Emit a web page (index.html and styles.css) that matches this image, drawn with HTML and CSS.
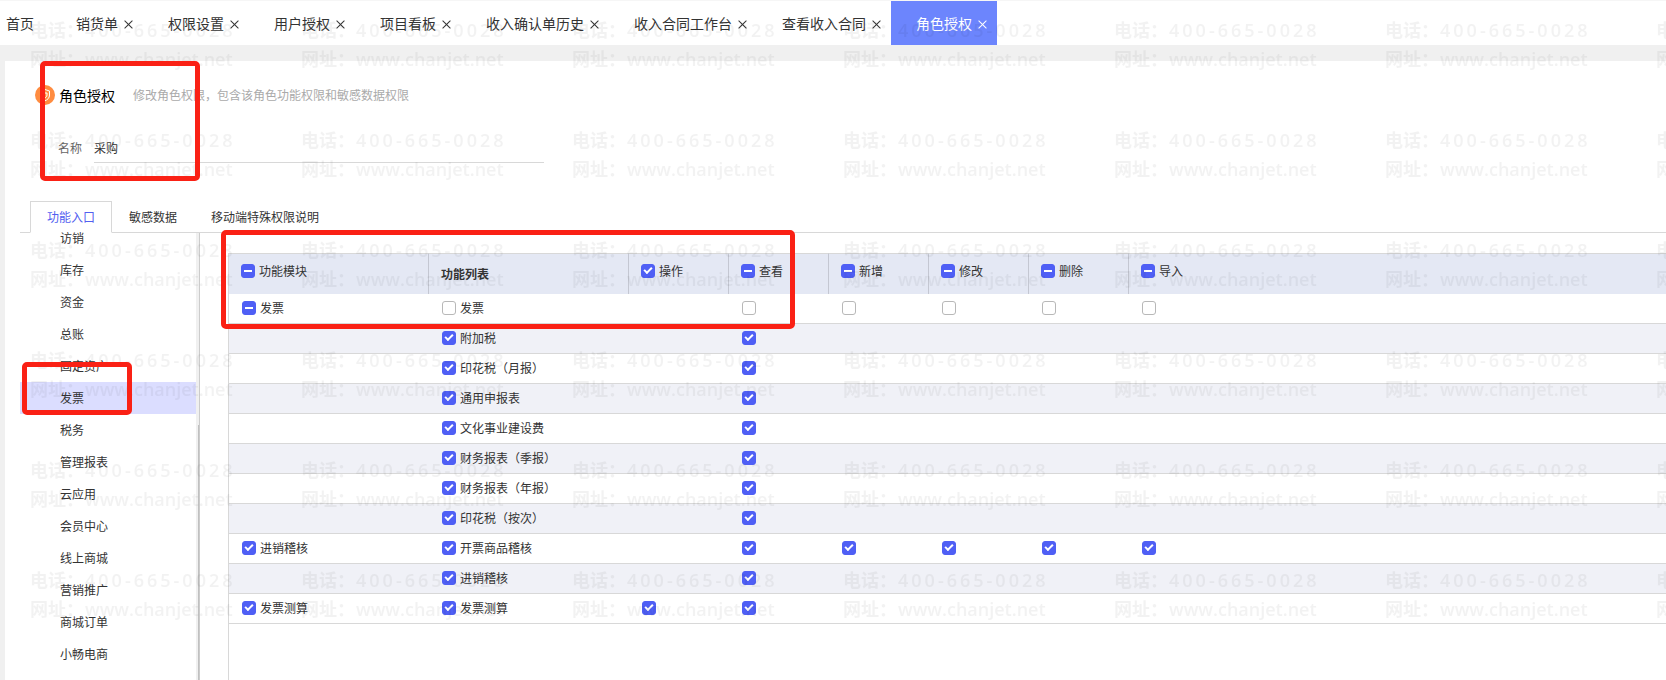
FILE: index.html
```html
<!DOCTYPE html>
<html lang="zh-CN">
<head>
    <meta charset="UTF-8" />
    <meta name="viewport" content="width=device-width, initial-scale=1" />
    <title>角色授权</title>
    <link rel="stylesheet" href="styles.css">
</head>
<body>

<nav class="page-tabs">
    <a class="home" href="#">首页</a>
    <div class="page-tab"><a href="#">销货单</a><button class="close" aria-label="关闭销货单"></button></div>
    <div class="page-tab"><a href="#">权限设置</a><button class="close" aria-label="关闭权限设置"></button></div>
    <div class="page-tab"><a href="#">用户授权</a><button class="close" aria-label="关闭用户授权"></button></div>
    <div class="page-tab"><a href="#">项目看板</a><button class="close" aria-label="关闭项目看板"></button></div>
    <div class="page-tab"><a href="#">收入确认单历史</a><button class="close" aria-label="关闭收入确认单历史"></button></div>
    <div class="page-tab"><a href="#">收入合同工作台</a><button class="close" aria-label="关闭收入合同工作台"></button></div>
    <div class="page-tab"><a href="#">查看收入合同</a><button class="close" aria-label="关闭查看收入合同"></button></div>
    <div class="page-tab active"><a href="#">角色授权</a><button class="close" aria-label="关闭角色授权"></button></div>
</nav>

<main class="content">
    <header class="title-row">
        <svg class="title-icon" width="20" height="20" viewBox="0 0 20 20" aria-hidden="true">
            <circle cx="10" cy="10" r="10" fill="#ff8c40" />
            <path d="M10 4.5 L14.5 6 V10 C14.5 13 12.5 14.8 10 15.8 C7.5 14.8 5.5 13 5.5 10 V6 Z" fill="none" stroke="#fff" />
            <path d="M8 8 H12 V10 C12 11.5 11 12.3 10 13 C9 12.3 8 11.5 8 10 Z" fill="none" stroke="#fff" />
        </svg>
        <h1>角色授权</h1>
        <p>修改角色权限，包含该角色功能权限和敏感数据权限</p>
    </header>

    <div class="name-row">
        <label for="roleName">名称</label>
        <input type="text" id="roleName" value="采购" />
    </div>

    <div class="tabs">
        <button class="tab active">功能入口</button>
        <button class="tab">敏感数据</button>
        <button class="tab">移动端特殊权限说明</button>
    </div>

    <div class="workspace">
        <aside class="sidebar">
            <ul class="menu">
                <li><a href="#">访销</a></li>
                <li><a href="#">库存</a></li>
                <li><a href="#">资金</a></li>
                <li><a href="#">总账</a></li>
                <li><a href="#">固定资产</a></li>
                <li><a class="active" href="#">发票</a></li>
                <li><a href="#">税务</a></li>
                <li><a href="#">管理报表</a></li>
                <li><a href="#">云应用</a></li>
                <li><a href="#">会员中心</a></li>
                <li><a href="#">线上商城</a></li>
                <li><a href="#">营销推广</a></li>
                <li><a href="#">商城订单</a></li>
                <li><a href="#">小畅电商</a></li>
            </ul>
            <div class="scroll-track"><div class="scroll-thumb"></div></div>
        </aside>

        <section class="grid">
            <table>
                <colgroup>
                    <col class="wide"><col class="wide">
                    <col class="narrow"><col class="narrow"><col class="narrow"><col class="narrow"><col class="narrow">
                    <col>
                </colgroup>
                <thead>
                    <tr>
                        <th><label><input type="checkbox" class="partial">功能模块</label></th>
                        <th class="plain">功能列表</th>
                        <th><label><input type="checkbox" checked>操作</label></th>
                        <th><label><input type="checkbox" class="partial">查看</label></th>
                        <th><label><input type="checkbox" class="partial">新增</label></th>
                        <th><label><input type="checkbox" class="partial">修改</label></th>
                        <th><label><input type="checkbox" class="partial">删除</label></th>
                        <th><label><input type="checkbox" class="partial">导入</label></th>
                    </tr>
                </thead>
                <tbody id="rows"></tbody>
            </table>
        </section>
    </div>
</main>

<svg class="watermark" width="100%" height="100%" aria-hidden="true">
    <defs>
        <pattern id="mark" width="271" height="110" patternUnits="userSpaceOnUse">
            <text x="30" y="37">电话：</text>
            <text class="phone" x="85" y="37">400-665-0028</text>
            <text x="30" y="66">网址：</text>
            <text class="site" x="85" y="66">www.chanjet.net</text>
        </pattern>
    </defs>
    <rect width="100%" height="100%" fill="url(#mark)" />
</svg>

<div class="highlight highlight-role"></div>
<div class="highlight highlight-menu"></div>
<div class="highlight highlight-grid"></div>

<script src="script.js"></script>
</body>
</html>
```
FILE: styles.css
```css
* {
    box-sizing: border-box;
}
body {
    position: relative;
    display: flex;
    flex-direction: column;
    height: 100vh;
    margin: 0;
    overflow: hidden;
    background: #f0f0f0;
    color: #333;
    font-family: "Noto Sans CJK SC", sans-serif;
    font-size: 12px;
    line-height: 20px;
}
a {
    color: inherit;
    text-decoration: none;
}
button, input {
    font: inherit;
    color: inherit;
}

/* top page tabs */
.page-tabs {
    display: flex;
    flex: none;
    height: 45px;
    background: #fff;
    border-top: 1px solid #f6f6f6;
    font-size: 14px;
    white-space: nowrap;
}
.home {
    padding: 12px 17px 12px 6px;
}
.page-tab {
    display: flex;
    align-items: center;
    gap: 6px;
    padding: 0 11px 0 25px;
}
.page-tab.active {
    background: #6c85fd;
    color: #fff;
}
.close {
    position: relative;
    width: 8px;
    height: 8px;
    padding: 0;
    border: none;
    background: none;
    cursor: pointer;
}
.close::before,
.close::after {
    content: "";
    position: absolute;
    top: 5px;
    left: -1px;
    width: 11px;
    height: 1px;
    background: currentColor;
    transform: rotate(45deg);
}
.close::after {
    transform: rotate(-45deg);
}

.content {
    display: flex;
    flex-direction: column;
    flex: 1;
    min-height: 0;
    margin: 16px 0 0 5px;
    padding: 24px 0 0 15px;
    background: #fff;
}
.title-row {
    display: flex;
    align-items: center;
    padding-left: 15px;
}
.title-row h1 {
    margin: 0 18px 0 4px;
    color: #000;
    font-size: 14px;
    font-weight: normal;
}
.title-row p {
    margin: 0;
    color: #aaa;
}
.name-row {
    display: flex;
    align-items: center;
    gap: 12px;
    margin: 28px 0 38px;
    padding-left: 38px;
}
.name-row label {
    color: #666;
}
.name-row input {
    width: 450px;
    height: 30px;
    padding: 0;
    border: none;
    border-bottom: 1px solid #d8d8d8;
    background: none;
    outline: none;
}

/* inner tabs */
.tabs {
    display: flex;
    height: 32px;
    padding-left: 10px;
    border-bottom: 1px solid #d8d8d8;
}
.tab {
    height: 32px;
    padding: 0 17px;
    border: none;
    background: none;
    cursor: pointer;
}
.tab.active {
    padding: 0 16px;
    border: 1px solid #d8d8d8;
    border-bottom-color: #fff;
    background: #fff;
    color: #5260f0;
}

.workspace {
    display: flex;
    flex: 1;
    min-height: 0;
}
.sidebar {
    display: flex;
    flex: none;
    width: 180px;
}
.menu {
    flex: 1;
    margin: -11px 0 0;
    padding: 0;
    list-style: none;
}
.menu a {
    display: block;
    padding: 6px 0 6px 40px;
}
.menu .active {
    background: #dbddff;
}
.scroll-track {
    width: 4px;
    padding-top: 192px;
    background: #f0f0f0;
    border-right: 1px solid #ccc;
}
.scroll-thumb {
    height: 100%;
    margin-left: 2px;
    background: #c0c0c0;
}

/* permission table */
.grid {
    flex: 1;
    margin: 20px 0 0 28px;
    border-left: 1px solid #d8d8d8;
}
table {
    width: 100%;
    border-spacing: 0;
    table-layout: fixed;
}
.wide {
    width: 200px;
}
.narrow {
    width: 100px;
}
th, td {
    padding: 0 0 2px 13px;
    text-align: left;
}
th {
    height: 41px;
    padding: 0 0 6px 12px;
    border-top: 1px solid #d8d8d8;
    border-right: 1px solid #c4c7d2;
    background: #e4e8f4;
    font-weight: normal;
}
th.plain {
    padding-bottom: 0;
    font-weight: bold;
}
th:last-child {
    border-right: none;
}
td {
    height: 30px;
    border-bottom: 1px solid #d8d8d8;
}
tbody tr:nth-child(even) {
    background: #f0f1f7;
}
label {
    display: flex;
    align-items: center;
}
input[type="checkbox"] {
    appearance: none;
    position: relative;
    width: 14px;
    height: 14px;
    margin: 0 4px 0 0;
    border: 1px solid #b8b8b8;
    border-radius: 3px;
    background: #fff;
}
input[type="checkbox"]:checked,
input.partial {
    border-color: #4f5ff5;
    background: #4f5ff5;
}
input[type="checkbox"]:checked::before {
    content: "";
    position: absolute;
    top: 2px;
    left: 2px;
    width: 6px;
    height: 3px;
    border: solid #fff;
    border-width: 0 0 2px 2px;
    transform: rotate(-45deg);
}
input.partial::before {
    content: "";
    position: absolute;
    top: 5px;
    left: 2px;
    width: 8px;
    height: 2px;
    background: #fff;
}

.watermark {
    position: absolute;
    inset: 0;
    pointer-events: none;
}
.watermark text {
    fill: rgba(0, 0, 0, 0.05);
    font-family: "Noto Sans CJK SC", sans-serif;
    font-size: 18px;
    font-weight: 700;
}
.watermark .phone,
.watermark .site {
    font-family: "Open Sans", "Noto Sans", sans-serif;
    font-weight: 600;
}
.watermark .phone {
    letter-spacing: 3px;
}

/* red callout frames */
.highlight {
    position: absolute;
    border: 5px solid #fa2115;
    border-radius: 5px;
    pointer-events: none;
}
.highlight-role {
    top: 61px;
    left: 40px;
    width: 160px;
    height: 120px;
}
.highlight-menu {
    top: 362px;
    left: 22px;
    width: 110px;
    height: 53px;
}
.highlight-grid {
    top: 230px;
    left: 221px;
    width: 574px;
    height: 99px;
}
```
FILE: script.js
```javascript
// 1 = checked, 0 = unchecked, 2 = partly checked, null = no box
const rows = [
    { module: '发票', moduleState: 2, name: '发票', state: 0, ops: [null, 0, 0, 0, 0, 0] },
    { name: '附加税', state: 1, ops: [null, 1] },
    { name: '印花税（月报）', state: 1, ops: [null, 1] },
    { name: '通用申报表', state: 1, ops: [null, 1] },
    { name: '文化事业建设费', state: 1, ops: [null, 1] },
    { name: '财务报表（季报）', state: 1, ops: [null, 1] },
    { name: '财务报表（年报）', state: 1, ops: [null, 1] },
    { name: '印花税（按次）', state: 1, ops: [null, 1] },
    { module: '进销稽核', moduleState: 1, name: '开票商品稽核', state: 1, ops: [null, 1, 1, 1, 1, 1] },
    { name: '进销稽核', state: 1, ops: [null, 1] },
    { module: '发票测算', moduleState: 1, name: '发票测算', state: 1, ops: [1, 1] }
];
const opNames = ['操作', '查看', '新增', '修改', '删除', '导入'];

function box(state, text, ariaLabel) {
    const checked = state === 1 ? ' checked' : '';
    const partial = state === 2 ? ' class="partial"' : '';
    const aria = ariaLabel ? ` aria-label="${ariaLabel}"` : '';
    return `<label><input type="checkbox"${partial}${checked}${aria}>${text}</label>`;
}

document.getElementById('rows').innerHTML = rows.map(row => {
    const module = row.module ? box(row.moduleState, row.module) : '';
    const ops = opNames.map((op, i) => {
        const state = row.ops[i];
        return `<td>${state == null ? '' : box(state, '', row.name + op)}</td>`;
    }).join('');
    return `<tr><td>${module}</td><td>${box(row.state, row.name)}</td>${ops}</tr>`;
}).join('');
```
